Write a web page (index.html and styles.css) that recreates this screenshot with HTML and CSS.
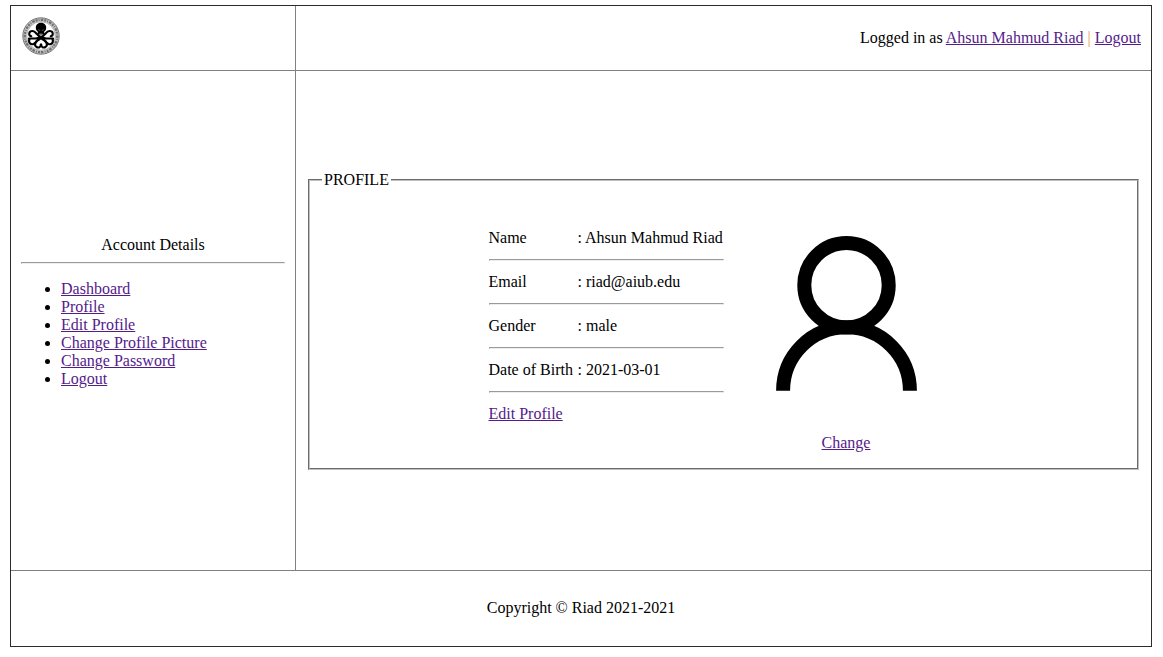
FILE: index.html
```html
<!DOCTYPE html>
<html lang="en">
<head>
<meta charset="utf-8">
<title>Profile</title>
<link rel="stylesheet" href="styles.css">
</head>
<body>
<div class="page">
  <header class="brand">
    <svg class="logo" viewBox="0 0 38 38" role="img" aria-label="Logo">
      <circle cx="19" cy="19" r="18.2" fill="#c4c4c4" stroke="#777" stroke-width="1"/>
      <circle cx="19" cy="19" r="16.2" fill="none" stroke="#707070" stroke-width="2.2" stroke-dasharray="1.900 1.100 .9 1.300 2.600 1"/>
      <circle cx="19" cy="19" r="14.2" fill="#fff" stroke="#999" stroke-width=".6"/>
      <g fill="none" stroke="#000" stroke-width="2.100" stroke-linecap="round">
        <path d="M19 20C15 19 14 14 10.500 14C6.500 14 6.300 18.500 9.300 19.300"/>
        <path d="M19 20C23 19 24 14 27.500 14C31.500 14 31.700 18.500 28.700 19.300"/>
        <path d="M7 21.500H14L19 20L24 21.500H31"/>
        <path d="M7.500 22C6 25.500 9 28 11.500 27C14.500 25.500 15 22 19 20.500C23 22 23.500 25.500 26.500 27C29 28 32 25.500 30.500 22"/>
        <path d="M18 22C13.500 24 11.500 28 14.500 30C17 31.500 19 29.500 18.700 27.500"/>
        <path d="M20 22C24.500 24 26.500 28 23.500 30C21 31.500 19 29.500 19.300 27.500"/>
      </g>
      <path d="M13.800 10.500C13.800 4 24.200 4 24.200 10.500C24.200 13.200 23.200 13.700 22.200 14.500V17.600H15.800V14.500C14.800 13.700 13.800 13.200 13.800 10.500Z"/>
      <path d="M16.200 12.700L18.200 13.500M21.800 12.700L19.800 13.500M18.200 16V17.300M19.800 16V17.300" stroke="#888" stroke-width=".6"/>
    </svg>
  </header>
  <div class="session">
    <span>Logged in as <a href="#">Ahsun Mahmud Riad</a> <span class="divider">|</span> <a href="#">Logout</a></span>
  </div>
  <nav class="sidebar">
    <div class="sidebar-title">Account Details</div>
    <hr class="rule">
    <ul class="menu">
      <li><a href="#">Dashboard</a></li>
      <li><a href="#">Profile</a></li>
      <li><a href="#">Edit Profile</a></li>
      <li><a href="#">Change Profile Picture</a></li>
      <li><a href="#">Change Password</a></li>
      <li><a href="#">Logout</a></li>
    </ul>
  </nav>
  <main class="content">
    <fieldset class="profile">
      <legend class="legend">PROFILE</legend>
      <div class="columns">
        <div class="details">
          <div class="row"><span>Name</span><span>: Ahsun Mahmud Riad</span></div>
          <hr class="rule">
          <div class="row"><span>Email</span><span>: riad@aiub.edu</span></div>
          <hr class="rule">
          <div class="row"><span>Gender</span><span>: male</span></div>
          <hr class="rule">
          <div class="row"><span>Date of Birth</span><span>: 2021-03-01</span></div>
          <hr class="rule">
          <a href="#">Edit Profile</a>
        </div>
        <div class="picture">
          <svg class="avatar" viewBox="0 0 141 155" role="img" aria-label="Profile picture">
            <g fill="none" stroke="#000" stroke-width="14">
              <circle cx="70.500" cy="49.200" r="42.200"/>
              <path d="M7.100 154.700a63.400 63.400 0 0 1 126.800 0"/>
            </g>
          </svg>
          <a href="#">Change</a>
        </div>
      </div>
    </fieldset>
  </main>
  <footer class="footer">Copyright © Riad 2021-2021</footer>
</div>
</body>
</html>
```
FILE: styles.css
```css
* { box-sizing: border-box; }
body {
  margin: 5px 11px 0 10px;
  background: #fff;
  color: #000;
  font: 16px/18px "Liberation Serif", "Times New Roman", serif;
}
a { color: #551a8b; }
.page {
  display: grid;
  grid-template-columns: 285px 1fr;
  grid-template-rows: 65px 500px 75px;
  border: 1px solid #2b2b2b;
}
.brand, .sidebar { border-right: 1px solid #808080; }
.brand, .session, .sidebar, .content { border-bottom: 1px solid #808080; }
.brand { padding: 11px; }
.logo { display: block; width: 38px; height: 38px; }
.session {
  display: flex;
  justify-content: flex-end;
  align-items: center;
  padding-right: 10px;
}
.divider { color: #e89a48; }
.sidebar { padding: 165px 10px 0; }
.sidebar-title { text-align: center; }
.rule {
  margin: 8px 0;
  border: 1px solid;
  border-color: #9a9a9a #eee #eee #9a9a9a;
}
.menu { margin: 16px 0 0; padding-left: 40px; }
.content { padding: 100px 12px 0; }
.profile {
  height: 299px;
  margin: 0;
  padding: 0 12px;
  border: 2px groove #c0c0c0;
}
.legend { padding: 0 2px; }
.columns {
  display: flex;
  justify-content: center;
  gap: 52px;
  padding: 40px 42px 0 0;
}
.details { width: 235px; white-space: nowrap; }
.details .rule { margin: 12px 0; }
.row { display: grid; grid-template-columns: 89px 1fr; }
.picture {
  display: flex;
  flex-direction: column;
  align-items: center;
  gap: 43px;
  padding-top: 7px;
}
.avatar { width: 141px; height: 155px; }
.footer {
  grid-column: 1 / -1;
  display: flex;
  justify-content: center;
  align-items: center;
  padding-bottom: 1px;
}
```
